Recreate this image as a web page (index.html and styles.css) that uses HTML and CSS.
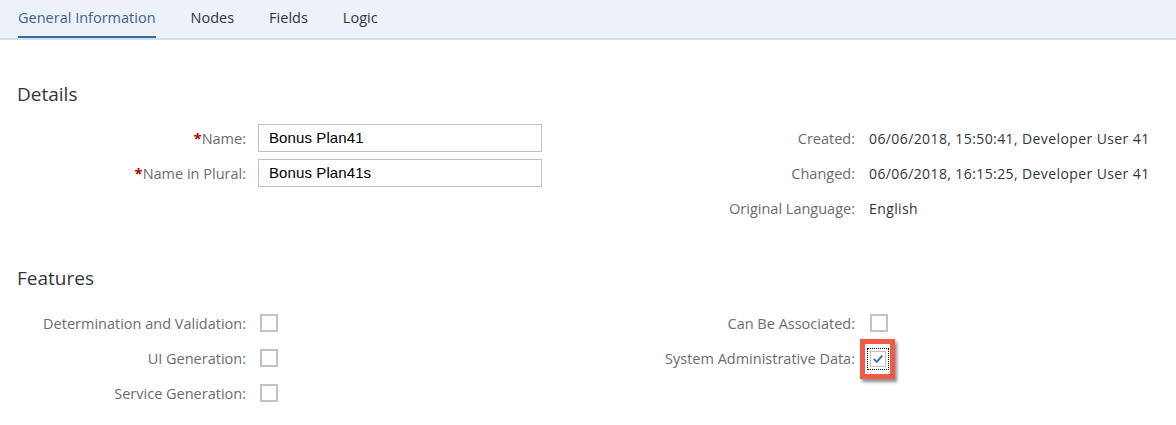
FILE: index.html
```html
<!DOCTYPE html>
<html>
<head>
<meta charset="utf-8">
<link rel="stylesheet" href="styles.css">
</head>
<body>
<div class="tabbar">
  <div class="tab active"><span class="tab-text">General Information</span></div>
  <div class="tab"><span class="tab-text">Nodes</span></div>
  <div class="tab"><span class="tab-text">Fields</span></div>
  <div class="tab"><span class="tab-text">Logic</span></div>
</div>
<div class="page">
  <h2 class="section-title details-title">Details</h2>
  <div class="form">
    <div class="label"><span class="req">*</span>Name:</div>
    <div class="field"><div class="input">Bonus Plan41</div></div>
    <div class="label">Created:</div>
    <div class="value">06/06/2018, 15:50:41, Developer User 41</div>

    <div class="label"><span class="req">*</span>Name in Plural:</div>
    <div class="field"><div class="input">Bonus Plan41s</div></div>
    <div class="label">Changed:</div>
    <div class="value">06/06/2018, 16:15:25, Developer User 41</div>

    <div class="label"></div>
    <div class="field"></div>
    <div class="label">Original Language:</div>
    <div class="value">English</div>
  </div>

  <h2 class="section-title features-title">Features</h2>
  <div class="form">
    <div class="label">Determination and Validation:</div>
    <div class="field"><span class="cb"></span></div>
    <div class="label">Can Be Associated:</div>
    <div class="value"><span class="cb cb-right"></span></div>

    <div class="label">UI Generation:</div>
    <div class="field"><span class="cb"></span></div>
    <div class="label">System Administrative Data:</div>
    <div class="value">
      <span class="highlight">
        <span class="focus">
          <span class="cb cb-checked">
            <svg viewBox="0 0 12 12" width="12" height="12"><path d="M2.2 6.4 L4.8 8.9 L9.8 3.2" fill="none" stroke="#2f6db0" stroke-width="1.8" stroke-linecap="round" stroke-linejoin="round"/></svg>
          </span>
        </span>
      </span>
    </div>

    <div class="label">Service Generation:</div>
    <div class="field"><span class="cb"></span></div>
    <div class="label"></div>
    <div class="value"></div>
  </div>
</div>
</body>
</html>
```
FILE: styles.css
```css
html, body {
  margin: 0;
  padding: 0;
  background: #ffffff;
}
body {
  font-family: "Open Sans", "Noto Sans", sans-serif;
  color: #32363a;
  width: 1176px;
  height: 425px;
  overflow: hidden;
}
.tabbar {
  display: flex;
  gap: 35px;
  height: 38px;
  background: #edf1f8;
  border-bottom: 2px solid #d6e0ee;
  padding-left: 18px;
}
.tab {
  display: flex;
  font-size: 14.5px;
  color: #32363a;
}
.tab-text {
  box-sizing: border-box;
  height: 38px;
  line-height: 36px;
  border-bottom: 2px solid transparent;
}
.tab.active .tab-text {
  color: #3a6593;
  border-bottom-color: #366ba3;
}
.page {
  padding-top: 42px;
}
.section-title {
  margin: 0;
  padding-left: 17px;
  font-weight: normal;
  font-size: 19px;
  line-height: 24px;
  color: #32363a;
}
.form {
  display: grid;
  grid-template-columns: 258px 342px 269px 1fr;
  grid-auto-rows: 28px;
  row-gap: 7px;
  margin-top: 18px;
}
.features-title {
  margin-top: 44px;
}
.features-title + .form {
  margin-top: 19px;
}
.label {
  display: flex;
  align-items: center;
  justify-content: flex-end;
  padding-right: 12px;
  font-size: 14.5px;
  color: #6a6d70;
  white-space: nowrap;
}
.form > .label:nth-child(4n+3) {
  padding-right: 14px;
}
.req {
  color: #bb0000;
  font-weight: bold;
  font-size: 15px;
}
.field, .value {
  display: flex;
  align-items: center;
}
.value {
  font-size: 14px;
  letter-spacing: 0.4px;
  color: #32363a;
  white-space: nowrap;
}
.input {
  box-sizing: border-box;
  width: 284px;
  height: 28px;
  border: 1px solid #bfbfbf;
  padding-left: 10px;
  font-family: "Liberation Sans", Arial, sans-serif;
  font-size: 15px;
  letter-spacing: 0.1px;
  line-height: 26px;
  color: #000;
}
.cb {
  box-sizing: border-box;
  display: inline-flex;
  align-items: center;
  justify-content: center;
  width: 18px;
  height: 18px;
  border: 2px solid #c2c2c2;
  margin-left: 2px;
  background: #fff;
}
.cb-right {
  margin-left: 1px;
}
.highlight {
  position: relative;
  display: inline-flex;
  align-items: center;
  justify-content: center;
  box-sizing: border-box;
  width: 35px;
  height: 40px;
  margin-left: -9px;
  margin-top: 1px;
  border: 5px solid #f25a48;
  box-shadow: 2px 3px 3px rgba(0, 0, 0, 0.45);
  background: #fff;
}
.focus {
  display: inline-flex;
  padding: 2px;
  outline: 1px dotted #000;
}
.cb-checked {
  margin-left: 0;
  border-width: 1px;
  border-color: #c2c2c2;
  width: 16px;
  height: 16px;
}
```
